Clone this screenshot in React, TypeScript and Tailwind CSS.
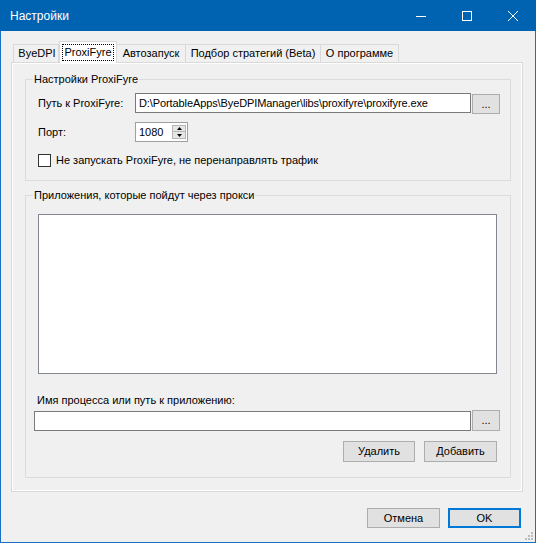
import React from "react";

function Btn({ w, h, children, cls = "" }: { w: string; h: string; children: React.ReactNode; cls?: string }) {
  return (
    <div className={`${w} ${h} ${cls} flex items-center justify-center bg-[#e1e1e1] border border-[#adadad] leading-none`}>
      {children}
    </div>
  );
}

export default function App() {
  return (
    <div className="w-[536px] h-[543px] bg-[#1a6fc4] px-px pb-px flex flex-col font-['Liberation_Sans',Arial,sans-serif] text-[11px] text-black">
      {/* Title bar */}
      <div className="h-[31px] -mx-px bg-[#0063b1] flex items-center text-white">
        <div className="pl-[10px] text-[12px] flex-1">Настройки</div>
        <div className="w-[46px] h-[31px] flex items-center justify-center">
          <svg width="10" height="10" viewBox="0 0 10 10"><path d="M0 5.5H10" stroke="#fff" strokeWidth="1" /></svg>
        </div>
        <div className="w-[46px] h-[31px] flex items-center justify-center">
          <svg width="10" height="10" viewBox="0 0 10 10"><rect x="0.5" y="0.5" width="9" height="9" fill="none" stroke="#fff" strokeWidth="1" /></svg>
        </div>
        <div className="w-[46px] h-[31px] flex items-center justify-center">
          <svg width="10" height="10" viewBox="0 0 10 10"><path d="M0 0L10 10M10 0L0 10" stroke="#fff" strokeWidth="1" /></svg>
        </div>
      </div>

      {/* Body */}
      <div className="flex-1 bg-[#f0f0f0] relative pl-[10px] pt-[10px] flex flex-col">
        {/* Tabs */}
        <div className="flex items-end h-[21px] pl-[2px] relative z-10">
          <div className="w-[46px] h-[18px] border border-b-0 border-[#d9d9d9] bg-[#f0f0f0] flex items-center justify-center pl-[2px]">ByeDPI</div>
          <div className="w-[58px] h-[22px] -mb-px border border-b-0 border-[#d9d9d9] bg-white flex items-center justify-center px-[2px] pt-[2px] pb-[2px]">
            <div className="w-full h-full border border-dotted border-black flex items-center justify-center">ProxiFyre</div>
          </div>
          <div className="w-[69px] h-[18px] border border-b-0 border-l-0 border-[#d9d9d9] bg-[#f0f0f0] flex items-center justify-center">Автозапуск</div>
          <div className="w-[135px] h-[18px] border border-b-0 border-l-0 border-[#d9d9d9] bg-[#f0f0f0] flex items-center justify-center">Подбор стратегий (Beta)</div>
          <div className="w-[78px] h-[18px] border border-b-0 border-l-0 border-[#d9d9d9] bg-[#f0f0f0] flex items-center justify-center">О программе</div>
        </div>

        {/* Panel */}
        <div className="w-[512px] h-[430px] border border-[#d9d9d9] shadow-[inset_0_0_0_1px_#ffffff] bg-[#f0f0f0] pl-[13px] pr-[11px] flex flex-col">
          {/* Group 1 */}
          <div className="relative mt-[16px] h-[102px] border border-[#dcdcdc] flex flex-col">
            <div className="absolute left-[7px] -top-[8px] px-[1px] bg-[#f0f0f0] leading-[14px]">Настройки ProxiFyre</div>
            <div className="mt-[13px] pl-[12px] flex items-start">
              <div className="w-[97px] leading-[20px]">Путь к ProxiFyre:</div>
              <div className="w-[336px] h-[20px] border border-[#7a7a7a] bg-white pl-[3px] leading-[18px] whitespace-nowrap overflow-hidden tracking-[-0.1px]">
                D:\PortableApps\ByeDPIManager\libs\proxifyre\proxifyre.exe
              </div>
              <Btn w="w-[28px]" h="h-[20px]" cls="ml-px mt-px">...</Btn>
            </div>
            <div className="mt-[8px] pl-[12px] flex items-start">
              <div className="w-[97px] leading-[20px]">Порт:</div>
              <div className="w-[53px] h-[20px] border border-[#a0a0a0] bg-white flex items-center">
                <div className="flex-1 pl-[3px] leading-[18px]">1080</div>
                <div className="w-[14px] h-[14px] mr-[1px] flex flex-col">
                  <div className="h-[7px] bg-[#e6e6e6] border border-[#b5b5b5] flex items-center justify-center">
                    <svg width="5" height="3" viewBox="0 0 5 3"><path d="M2.5 0L5 3H0Z" fill="#000" /></svg>
                  </div>
                  <div className="h-[7px] bg-[#e6e6e6] border border-t-0 border-[#b5b5b5] flex items-center justify-center">
                    <svg width="5" height="3" viewBox="0 0 5 3"><path d="M0 0H5L2.5 3Z" fill="#000" /></svg>
                  </div>
                </div>
              </div>
            </div>
            <div className="mt-[12px] pl-[12px] flex items-center h-[13px]">
              <div className="w-[13px] h-[13px] border border-[#333333] bg-white" />
              <div className="ml-[5px] leading-[13px]">Не запускать ProxiFyre, не перенаправлять трафик</div>
            </div>
          </div>

          {/* Group 2 */}
          <div className="relative mt-[14px] h-[283px] border border-[#dcdcdc] flex flex-col">
            <div className="absolute left-[7px] -top-[8px] px-[1px] bg-[#f0f0f0] leading-[14px]">Приложения, которые пойдут через прокси</div>
            <div className="mt-[18px] ml-[12px] w-[459px] h-[160px] border border-[#828790] bg-white" />
            <div className="mt-[19px] ml-[11px] leading-[14px]">Имя процесса или путь к приложению:</div>
            <div className="mt-[3px] ml-[8px] flex items-start">
              <div className="mt-px w-[437px] h-[20px] border border-[#7a7a7a] bg-white" />
              <Btn w="w-[28px]" h="h-[21px]" cls="ml-px">...</Btn>
            </div>
            <div className="mt-[10px] flex justify-end gap-[9px] pr-[13px]">
              <Btn w="w-[72px]" h="h-[21px]">Удалить</Btn>
              <Btn w="w-[73px]" h="h-[21px]">Добавить</Btn>
            </div>
          </div>
        </div>

        {/* Bottom buttons */}
        <div className="mt-[16px] flex justify-end gap-[8px] pr-[14px]">
          <Btn w="w-[73px]" h="h-[20px]">Отмена</Btn>
          <div className="w-[73px] h-[20px] flex items-center justify-center bg-[#e1e1e1] border-2 border-[#0078d7] leading-none">OK</div>
        </div>

        {/* Resize grip */}
        <svg className="absolute right-[2px] bottom-[2px]" width="8" height="8" viewBox="0 0 8 8">
          <rect x="6" y="0" width="2" height="2" fill="#bcbcbc" />
          <rect x="3" y="3" width="2" height="2" fill="#bcbcbc" />
          <rect x="6" y="3" width="2" height="2" fill="#bcbcbc" />
          <rect x="0" y="6" width="2" height="2" fill="#bcbcbc" />
          <rect x="3" y="6" width="2" height="2" fill="#bcbcbc" />
          <rect x="6" y="6" width="2" height="2" fill="#bcbcbc" />
        </svg>
      </div>
    </div>
  );
}
